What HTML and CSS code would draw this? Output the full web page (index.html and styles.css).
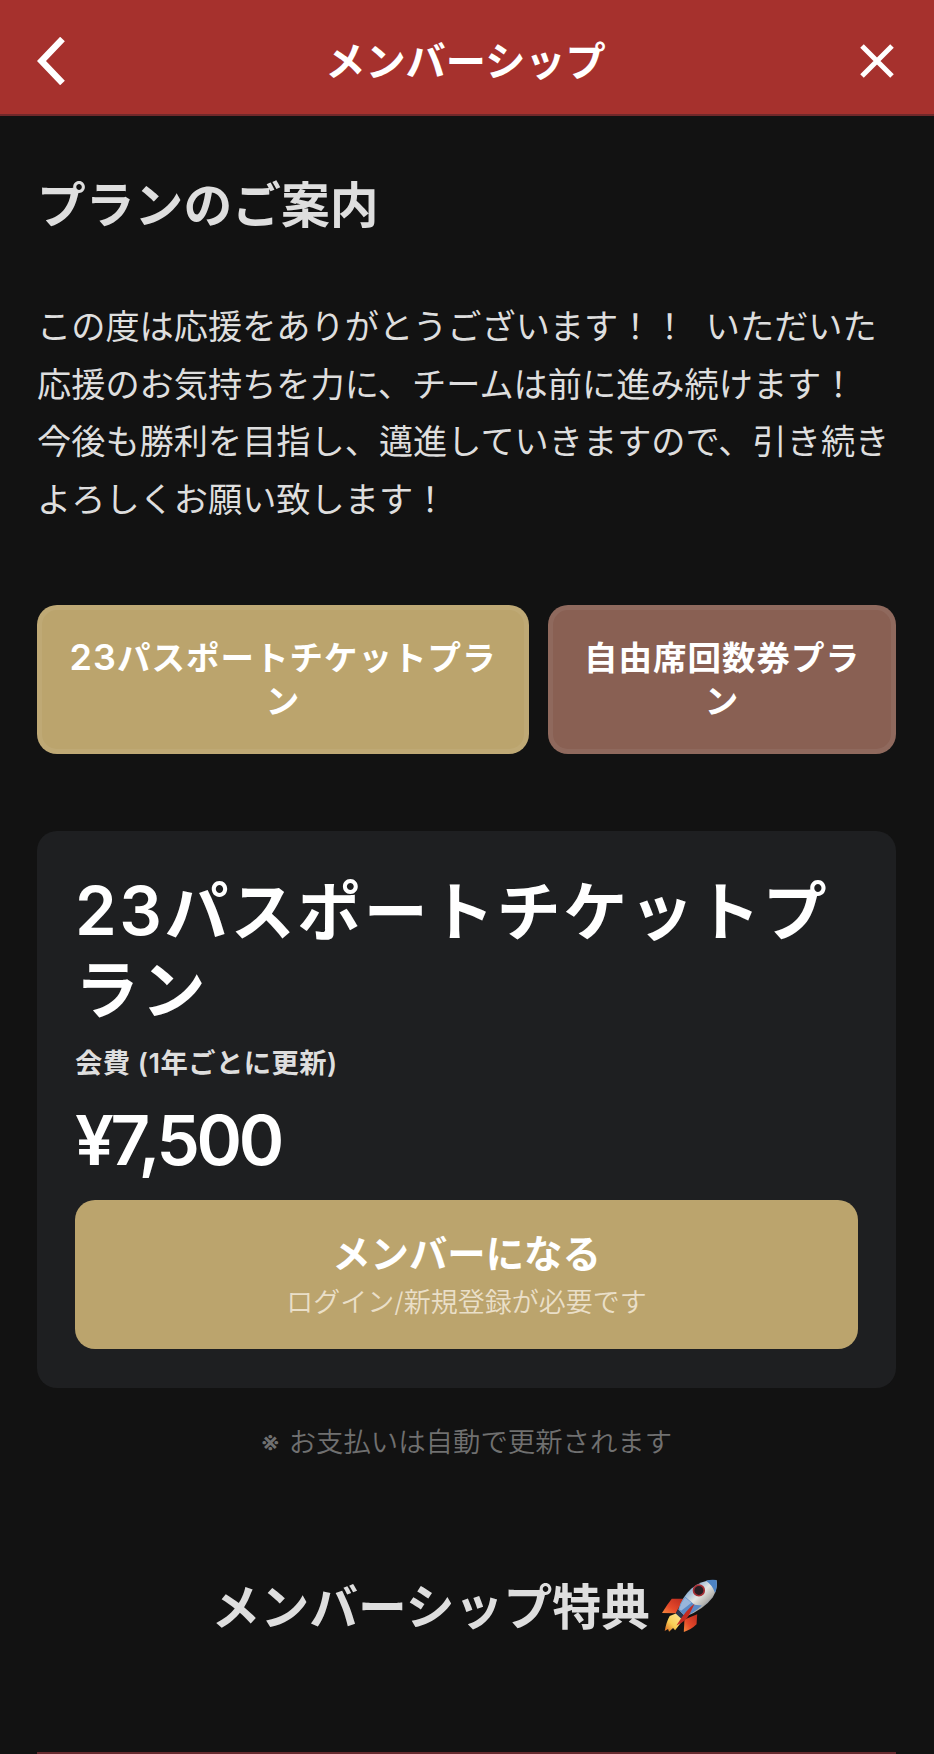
FILE: index.html
```html
<!DOCTYPE html>
<html lang="ja">
<head>
  <meta charset="UTF-8">
  <meta name="viewport" content="width=device-width, initial-scale=1.0">
  <title>メンバーシップ</title>
  <link rel="stylesheet" href="styles.css">
</head>
<body>
  <header class="header">
    <button class="icon-button" aria-label="戻る">
      <svg width="28" height="48" viewBox="0 0 28 48" fill="none" stroke="currentColor" stroke-width="6.500"><path d="M25.5 2L4.500 24l21 22"/></svg>
    </button>
    <h1 class="header-title">メンバーシップ</h1>
    <button class="icon-button" aria-label="閉じる">
      <svg width="34" height="34" viewBox="0 0 34 34" fill="none" stroke="currentColor" stroke-width="5"><path d="M2 2l30 30M32 2L2 32"/></svg>
    </button>
  </header>

  <main class="container">
    <h2 class="section-title">プランのご案内</h2>
    <p class="intro">この度は応援をありがとうございます！！&nbsp; いただいた<br>応援のお気持ちを力に、チームは前に進み続けます！<br>今後も勝利を目指し、邁進していきますので、引き続き<br>よろしくお願い致します！</p>

    <!-- Plan Tabs -->
    <div class="plan-tabs">
      <button class="plan-tab gold"><span class="tab-num">23</span>パスポートチケットプラン</button>
      <button class="plan-tab brown">自由席回数券プラン</button>
    </div>

    <!-- Selected Plan -->
    <section class="plan-card">
      <h3 class="plan-name"><span class="num">23</span>パスポートチケットプラン</h3>
      <p class="plan-cycle">会費 (1年ごとに更新)</p>
      <p class="plan-price">¥7,500</p>
      <button class="join-button">
        <span class="join-label">メンバーになる</span>
        <span class="join-note">ログイン/新規登録が必要です</span>
      </button>
    </section>
    <p class="renew-note"><span class="mark">※</span> お支払いは自動で更新されます</p>

    <!-- Benefits -->
    <h2 class="section-title benefits-title">メンバーシップ特典
      <svg class="rocket" viewBox="36 28 170 164" role="img" aria-label="ロケット">
        <defs>
          <linearGradient id="hull" x1="0" y1="0" x2="1" y2="1">
            <stop offset="0.2" stop-color="#6f9ed0"/>
            <stop offset="0.48" stop-color="#e4e5e2"/>
            <stop offset="0.65" stop-color="#b5b4b0"/>
            <stop offset="0.85" stop-color="#425a80"/>
          </linearGradient>
          <linearGradient id="flame" x1="1" y1="0" x2="0" y2="1">
            <stop offset="0" stop-color="#ffe9a0"/>
            <stop offset="0.6" stop-color="#f8cf55"/>
            <stop offset="1" stop-color="#d9601c"/>
          </linearGradient>
          <linearGradient id="fin" x1="1" y1="0" x2="0" y2="1">
            <stop offset="0" stop-color="#b92b20"/>
            <stop offset="0.6" stop-color="#e5492a"/>
            <stop offset="1" stop-color="#f48a3c"/>
          </linearGradient>
        </defs>
        <path fill="url(#fin)" d="M103 90L68 90Q54 108 39 132L80 133Z"/>
        <path fill="url(#fin)" d="M144 136L142 166Q126 182 104 189L106 152Z"/>
        <path fill="url(#flame)" d="M82 133L62 141Q52 158 47 186L57 180L60 188L72 177L78 184L104 150Z"/>
        <path fill="#293750" d="M87 121L110 143L98 151L80 134Z"/>
        <path fill="url(#hull)" d="M88 122Q98 86 126 60Q158 32 201 34Q207 58 190 86Q164 121 109 143Z"/>
        <path fill="#4c83c4" d="M170 36Q185 32 201 34Q206 52 197 73Q191 50 170 36Z"/>
        <path fill="#5b8ac6" d="M108 84L136 108L158 110Q134 132 109 143L88 122Q94 101 108 84Z"/>
        <path fill="#98b6dc" d="M108 86L127 102L96 126L90 121Q96 100 108 86Z"/>
        <path fill="#c42b22" d="M136 105Q112 121 82 170Q110 156 120 138Z"/>
        <circle cx="149" cy="65" r="16" fill="#271d22" stroke="#a72f35" stroke-width="5"/>
      </svg>
    </h2>
    <div class="benefit-card"></div>
  </main>
</body>
</html>
```
FILE: styles.css
```css
* {
  margin: 0;
  padding: 0;
  box-sizing: border-box;
}
body {
  font-family: Inter, 'Noto Sans CJK JP', sans-serif;
  background: #121212;
  color: #dedede;
  height: 1754px;
  overflow: hidden;
}
button {
  font-family: inherit;
  color: #fff;
  border: none;
  cursor: pointer;
}
.header {
  display: flex;
  align-items: center;
  justify-content: space-between;
  height: 116px;
  padding: 8px 40px 0 37px;
  background: #a6312d;
  border-bottom: 2px solid #70282a;
  color: #fff;
}
.icon-button {
  display: flex;
  width: 34px;
  background: none;
}
.header-title {
  padding-top: 2px;
  font-size: 40.2px;
  font-weight: 700;
  line-height: 58px;
}
.container {
  padding: 54px 38px 0 37px;
}
.section-title {
  font-size: 48.8px;
  font-weight: 700;
  line-height: 72px;
}
.intro {
  margin-top: 56px;
  font-size: 34.2px;
  line-height: 57.6px;
  white-space: nowrap;
}
.plan-tabs {
  display: grid;
  grid-template-columns: 492fr 348fr;
  gap: 19px;
  margin-top: 77px;
}
.plan-tab {
  height: 149px;
  padding: 1px 24px 0;
  border: 5px solid rgba(255, 255, 255, 0.06);
  border-radius: 20px;
  font-size: 33.5px;
  font-weight: 700;
  letter-spacing: 1px;
  line-height: 43px;
}
.tab-num {
  font-size: 36px;
  font-weight: 600;
  line-height: 1;
}
.gold {
  background-color: #bba46d;
}
.brown {
  background-color: #896053;
}
.plan-card {
  margin-top: 77px;
  height: 557px;
  padding: 42px 38px 38px;
  border-radius: 20px;
  background: #1e1f21;
}
.plan-name {
  color: #fff;
  font-size: 64px;
  font-weight: 700;
  letter-spacing: 2.5px;
  line-height: 78px;
}
.num {
  font-size: 67px;
  font-weight: 600;
  line-height: 1;
}
.plan-cycle {
  margin-top: 15px;
  font-size: 27.3px;
  font-weight: 600;
  letter-spacing: 0.45px;
  line-height: 40px;
}
.plan-price {
  margin-top: 16px;
  color: #fff;
  font-size: 69px;
  font-weight: 600;
  letter-spacing: -3.3px;
  line-height: 80px;
}
.join-button {
  display: flex;
  flex-direction: column;
  align-items: center;
  justify-content: center;
  width: 100%;
  height: 149px;
  margin-top: 20px;
  border-radius: 20px;
  background: #bba46d;
}
.join-label {
  font-size: 38.4px;
  font-weight: 700;
  line-height: 54px;
}
.join-note {
  margin-top: 2px;
  color: #eadfc8;
  font-size: 27px;
  font-weight: 350;
  line-height: 40px;
}
.renew-note {
  margin-top: 34px;
  color: #707070;
  font-size: 27.4px;
  font-weight: 350;
  line-height: 40px;
  text-align: center;
}
.mark {
  margin-right: 1px;
  font-weight: 500;
}
.benefits-title {
  height: 72px;
  margin-top: 110px;
  padding-right: 3px;
  text-align: center;
}
.rocket {
  width: 57px;
  height: 55px;
  vertical-align: -8px;
}
.benefit-card {
  height: 60px;
  margin-top: 108px;
  border-top: 2px solid #682b30;
}
```
